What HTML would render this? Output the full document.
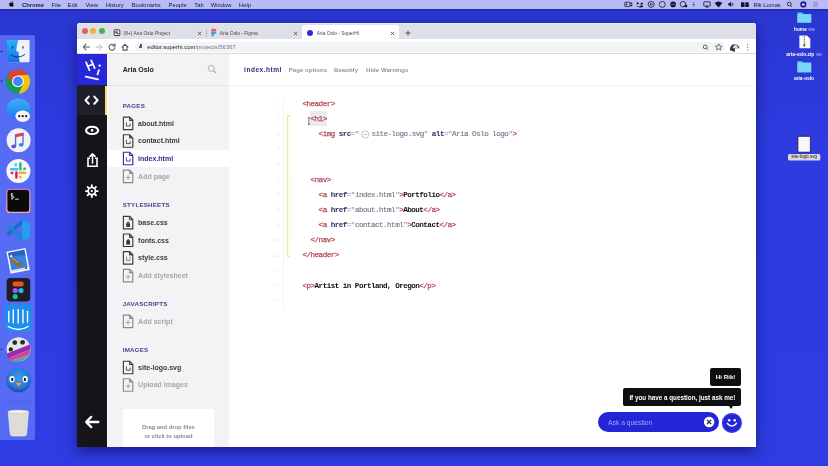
<!DOCTYPE html>
<html><head><meta charset="utf-8">
<style>
*{margin:0;padding:0;box-sizing:border-box}
html,body{width:828px;height:466px;overflow:hidden}
body{position:relative;font-family:"Liberation Sans",sans-serif;background:#3434de}
.a{position:absolute}
#desk{left:0;top:0;width:828px;height:466px;background:linear-gradient(180deg,#2a36d0 0%,#2d3be0 30%,#2e3ce4 100%)}
#menubar{left:0;top:0;width:828px;height:8.6px;background:#b9bcf4;color:#14144a;font-size:5.8px;line-height:10.4px;box-shadow:0 1px 2px rgba(0,0,60,.35);white-space:nowrap}
#menubar span{position:absolute;top:0}
#dock{left:0;top:34.6px;width:34.5px;height:405.5px;background:#566bf4;border-radius:0 2px 2px 0;box-shadow:inset 0 0.6px 0 #4a5ce8}
#win{left:77.4px;top:22.6px;width:678.8px;height:424px;background:#fff;border-radius:3px 3px 0 0;box-shadow:0 5px 14px rgba(0,0,50,.5)}
#tabs{left:77.4px;top:22.6px;width:678.8px;height:16.9px;background:#dee0e7;box-shadow:inset 0 0.6px 0 #f4f4f8;border-radius:3px 3px 0 0}
#toolbar{left:77.4px;top:39.5px;width:678.8px;height:14.5px;background:#fff;border-bottom:0.5px solid #dcdcdc}
.mono{font-family:"Liberation Mono",monospace}
.tabt{font-size:4.9px;color:#4a4a4a;line-height:8px;white-space:nowrap}
.side{left:77.4px;top:54px;width:29.8px;height:392.6px;background:#151519}
.files{left:107.2px;top:54px;width:121.4px;height:392.6px;background:#f3f3f5}
.ft{font-size:7px;font-weight:bold;color:#3a3a3a;line-height:10px;white-space:nowrap}
.fh{font-size:6.2px;font-weight:bold;color:#45458e;letter-spacing:0.22px;line-height:10px;white-space:nowrap}
.fi{width:10px;height:13px}
.code{font-family:"Liberation Mono",monospace;font-size:7.6px;letter-spacing:-0.53px;line-height:10px;white-space:pre;color:#222}
.t{color:#b54a58;-webkit-text-stroke:0.25px #b54a58}
.n{color:#2e2e66;font-weight:bold}
.s{color:#76768e;-webkit-text-stroke:0.15px #76768e}
.q{color:#888}
.b{font-weight:bold;color:#111}
.ln{font-family:"Liberation Mono",monospace;font-size:6.2px;color:#efefef;line-height:10px;width:10px;text-align:right}
</style></head><body>
<div id="root" class="a" style="left:0;top:0;width:828px;height:466px;will-change:transform;overflow:hidden">
<div id="desk" class="a"></div>

<!-- MENUBAR -->
<div id="menubar" class="a">
  <svg style="position:absolute;left:8.6px;top:1.4px" width="5" height="6" viewBox="0 0 170 200"><path fill="#111" d="M150 170c-8 12-17 24-30 24s-17-8-32-8-20 8-32 8-22-13-30-25C9 145-4 100 14 70c9-15 25-25 42-25 13 0 25 9 33 9s21-10 36-9c6 0 24 2 35 19-1 1-21 12-21 37 0 29 26 39 26 39s-6 18-15 30zM119 23c7-8 11-19 10-30-10 0-22 7-29 15-6 7-12 18-10 29 11 1 22-6 29-14z"/></svg>
  <span style="left:22px;font-weight:bold">Chrome</span>
  <span style="left:51.6px">File</span>
  <span style="left:67.6px">Edit</span>
  <span style="left:85.4px">View</span>
  <span style="left:105.7px">History</span>
  <span style="left:131.7px">Bookmarks</span>
  <span style="left:168.6px">People</span>
  <span style="left:194.3px">Tab</span>
  <span style="left:210.8px">Window</span>
  <span style="left:239px">Help</span>
  <span style="left:753.4px">Rik Lomas</span>
</div>

<svg class="a" style="left:620px;top:0" width="208" height="9" viewBox="620 0 208 9">
  <g fill="none" stroke="#15152e" stroke-width="0.8">
    <rect x="624.8" y="2.2" width="5.2" height="4.4" rx="0.5"/><path d="M630 3.6l1.8-1v3.6l-1.8-1"/>
    <circle cx="651.2" cy="4.4" r="3"/><circle cx="662.3" cy="4.4" r="3"/>
    <circle cx="683" cy="4.2" r="2.8"/>
    <rect x="703.8" y="1.8" width="6.4" height="4.3" rx="0.4"/>
    <path d="M728.3 3.2h1.2l1.8-1.5v5.4l-1.8-1.5h-1.2z" fill="#15152e" stroke="none"/><path d="M732.6 3q.8 1.4 0 2.8" />
    <circle cx="789.3" cy="4" r="1.9"/><path d="M790.6 5.4l1.6 1.6"/>
    <path d="M813 2.6h5M813 4.4h5M813 6.2h5" stroke="#7a7ec8"/>
  </g>
  <g fill="#15152e">
    <circle cx="626.6" cy="4.4" r="0.8" fill="#15152e"/>
    <path d="M637.3 2.2l2 1.3-1.3.9-2-1.3zM641.3 2.2l2 1.3-2 1.3-1.3-.9 1.3-.9zM636 5.1l2 1.3-.7.5M642.6 5.1 640.6 6.4l1.3.8 1.2-.8z"/>
    <path d="M639.3 6.6 641.3 5.3 643 6.4 641.3 7.6 639.3 7.6 637.6 6.4z" opacity=".9"/>
    <circle cx="651.2" cy="4.4" r="1.3"/><rect x="650.8" y="3" width="0.8" height="2.6" fill="#b9bcf4"/>
    <circle cx="673.1" cy="4.4" r="2.8"/><path d="M671.4 4.4h3.4" stroke="#b9bcf4" stroke-width="0.6"/>
    <rect x="684.5" y="4.8" width="2.6" height="2.4"/>
    <circle cx="693.7" cy="2.8" r="0.5"/><rect x="692.3" y="4.1" width="2.8" height="0.5"/><circle cx="693.7" cy="5.9" r="0.5"/>
    <path d="M705.4 7.4h3.2l-1.6-2z"/>
    <path d="M714.6 3.1Q718.5-.3 722.4 3.1L718.5 7.4Z"/>
    <path d="M741 2.2h2.3q1.3 0 1.3 1.2 0 .8-.6 1 .9.2.9 1.2 0 1.4-1.5 1.4H741z M745.3 2.2h2.3q1.3 0 1.3 1.2 0 .8-.6 1 .9.2.9 1.2 0 1.4-1.5 1.4h-2.4z"/>
    <circle cx="803.3" cy="4.4" r="3.1" fill="#1a2090"/>
  </g>
  <path d="M801.6 4.6q1.7-2 3.4 0-1.7 2-3.4 0" fill="#fff"/>
</svg>
<!-- DOCK -->
<div id="dock" class="a"></div>
<svg class="a" style="left:0;top:0" width="36" height="446" viewBox="0 0 36 446">
  <defs>
    <linearGradient id="msg" x1="0" y1="0" x2="0" y2="1"><stop offset="0" stop-color="#40aef8"/><stop offset="1" stop-color="#1a78ec"/></linearGradient>
    <linearGradient id="fnd" x1="0" y1="0" x2="0" y2="1"><stop offset="0" stop-color="#2ab0f8"/><stop offset="1" stop-color="#1670e6"/></linearGradient>
    <radialGradient id="twb" cx="0.5" cy="0.4" r="0.6"><stop offset="0" stop-color="#3a9af0"/><stop offset="0.7" stop-color="#2a78d8"/><stop offset="1" stop-color="#1a4aa8"/></radialGradient>
    <linearGradient id="note" x1="0" y1="0" x2="0" y2="1" gradientUnits="userSpaceOnUse" x2s="0"><stop offset="0" stop-color="#e4385e"/><stop offset="1" stop-color="#6a5ad8"/></linearGradient>
    <linearGradient id="trm" x1="0" y1="0" x2="0" y2="1"><stop offset="0" stop-color="#d070c0"/><stop offset="1" stop-color="#f0b0a0"/></linearGradient>
    <linearGradient id="vsc" x1="0" y1="0" x2="0" y2="1"><stop offset="0" stop-color="#2aa3ea"/><stop offset="1" stop-color="#157ad0"/></linearGradient>
  </defs>
  <circle cx="1.6" cy="51.4" r="0.8" fill="#1a1a40"/>
  <circle cx="1.6" cy="81" r="0.8" fill="#1a1a40"/>
  <circle cx="1.6" cy="349.5" r="0.8" fill="#1a1a40"/>
  <!-- finder -->
  <rect x="7" y="39.9" width="22.6" height="22.3" rx="1.4" fill="#eef2f8"/>
  <path d="M8.4 39.9H18.2Q16.6 45.5 16.2 51.6H18.5Q18.6 57.5 19.8 62.2H8.4Q7 62.2 7 60.8V41.3Q7 39.9 8.4 39.9Z" fill="url(#fnd)"/>
  <path d="M12.6 46.2v2.4M23 46.2v2.4" stroke="#1a2a50" stroke-width="1.1"/>
  <path d="M10.8 54.8Q18 59.5 25 54.3" fill="none" stroke="#1a2a50" stroke-width="0.9"/>
  <!-- chrome -->
  <circle cx="17.9" cy="81.4" r="12.2" fill="#0f9d58"/>
  <path d="M13.01 84.70 L7.03 75.86 A12.20 12.20 0 0 1 28.13 74.76 L17.49 75.51 L17.90 81.40 Z" fill="#db4437"/>
  <path d="M17.49 75.51 L28.13 74.76 A12.20 12.20 0 0 1 18.54 93.58 L23.20 83.99 L17.90 81.40 Z" fill="#f4c20d"/>
  <path d="M23.20 83.99 L18.54 93.58 A12.20 12.20 0 0 1 7.03 75.86 L13.01 84.70 L17.90 81.40 Z" fill="#0f9d58"/>
  <circle cx="17.9" cy="81.4" r="5.9" fill="#fff"/>
  <circle cx="17.9" cy="81.4" r="4.8" fill="#4285f4"/>
  <!-- messages -->
  <ellipse cx="18.3" cy="109" rx="11.8" ry="10.4" fill="url(#msg)"/>
  <ellipse cx="22.7" cy="116.2" rx="7.3" ry="5.7" fill="#f4f6fa"/>
  <circle cx="19.2" cy="116.2" r="1.15" fill="#1a1a2a"/><circle cx="22.7" cy="116.2" r="1.15" fill="#1a1a2a"/><circle cx="26.2" cy="116.2" r="1.15" fill="#1a1a2a"/>
  <!-- music -->
  <circle cx="18.6" cy="140.3" r="12" fill="#f1f1f6"/>
  <path d="M15 134.2 23.6 132.4V135.6L15 137.4Z" fill="#e4385e"/>
  <path d="M15.6 135v11.2M23 133.6v11" stroke="url(#note)" stroke-width="1.3" fill="none"/>
  <ellipse cx="13.7" cy="146.4" rx="2.3" ry="1.9" fill="#6a4cd0"/><ellipse cx="21.2" cy="144.8" rx="2.3" ry="1.9" fill="#2a8ee0"/>
  <!-- slack -->
  <circle cx="18.4" cy="171" r="12" fill="#f6f6f8"/>
  <g stroke-width="2.5" stroke-linecap="round" fill="none">
    <path d="M11.2 169.2h6" stroke="#36c5f0"/><path d="M15.8 164.6v0.4" stroke="#36c5f0"/>
    <path d="M20.4 163.6v5.6" stroke="#2eb67d"/><path d="M24.4 168.8h0.4" stroke="#2eb67d"/>
    <path d="M19.6 172.8h5.6" stroke="#ecb22e"/><path d="M20.4 177v0.4" stroke="#ecb22e"/>
    <path d="M16.4 172.6v5" stroke="#e01e5a"/><path d="M11.8 173h0.4" stroke="#e01e5a"/>
  </g>
  <!-- terminal -->
  <rect x="6.8" y="189.4" width="23" height="23" rx="3" fill="#0a0a0a" stroke="url(#trm)" stroke-width="1.3"/>
  <path d="M12.6 193.6q-1.6.2-1.4 1.3.2 1 1.4 1.2 1.2.2 1.2 1.2-.1 1.1-1.8 1.2M11.9 192.8v7" fill="none" stroke="#fff" stroke-width="0.8"/><path d="M15.2 199.2h3.4" stroke="#fff" stroke-width="0.9"/>
  <!-- vscode -->
  <path d="M23.2 221 8.6 233.6" stroke="#1470c4" stroke-width="3.4" stroke-linecap="round"/>
  <path d="M8.6 226.6 23.2 239.6" stroke="#1a84d6" stroke-width="3.4" stroke-linecap="round"/>
  <path d="M22.4 219.4 29.8 222.8V238.2L22.4 241.6Z" fill="#22a2ee"/>
  <!-- preview -->
  <g transform="rotate(-11 18 261)">
    <rect x="8.3" y="249.6" width="19.6" height="22.4" fill="#eef4fb"/>
    <rect x="9.9" y="251.2" width="16.4" height="17.6" fill="#3a7ee0"/>
    <path d="M9.9 251.2h16.4v6Q18 254 9.9 257z" fill="#2a62c8"/>
    <path d="M11.5 256q3 1 5 4 2 3 6.5 6.5l-1 1.5q-6-2-9-5.5-1.5-2-1.5-6.5z" fill="#8a6a3a"/>
    <path d="M13 257.5q2.5 2 4.5 5" stroke="#d8b870" stroke-width="0.9" fill="none"/>
    <circle cx="12.3" cy="255" r="1.2" fill="#f0f0f0"/>
    <rect x="9.9" y="268.8" width="16.4" height="1.6" fill="#c8dcf0"/>
    <circle cx="24.5" cy="269.6" r="0.9" fill="#223"/>
  </g>
  <!-- figma -->
  <rect x="6.6" y="277.9" width="23.6" height="23.7" rx="4" fill="#1e1e24"/>
  <rect x="12.5" y="281.5" width="11.2" height="5" rx="2.5" fill="#f24e1e"/>
  <circle cx="15.2" cy="290.5" r="2.6" fill="#a259ff"/><circle cx="21" cy="290.5" r="2.6" fill="#1abcfe"/><circle cx="15.2" cy="296.5" r="2.6" fill="#0acf83"/>
  <!-- intercom -->
  <rect x="5" y="304.2" width="26.5" height="27.3" rx="1.5" fill="#1f8ded"/>
  <g stroke="#fff" stroke-width="1.4" stroke-linecap="round"><path d="M8.8 311.5v10.5M13.3 310v12.8M18.2 309.5v13.6M23 310v12.8M27.5 311.5v10.5"/><path d="M8.2 326.5q10 6 20 0" fill="none"/></g>
  <!-- movie circle -->
  <circle cx="18.6" cy="349.3" r="12" fill="#e4e4ea"/>
  <path d="M7 353.5 29.8 344.5Q30.5 347 30.4 349.5L8.2 358.2Q7.3 356 7 353.5z" fill="#9a2ab0"/>
  <path d="M8.2 358.2 30.4 349.5Q30 353 28.5 355.5L10 361Q8.8 359.8 8.2 358.2z" fill="#c84aa0"/>
  <path d="M10 361 28.5 355.5Q26 359 22.5 360.6 18 362 12.5 361.6z" fill="#5aa890"/>
  <circle cx="14.8" cy="342.6" r="2.4" fill="#2a2a2a"/><circle cx="22.6" cy="342.3" r="2.4" fill="#2a2a2a"/><circle cx="10.8" cy="349.4" r="2.2" fill="#2a2a2a"/>
  <!-- tweetbot -->
  <circle cx="18.6" cy="380" r="12.3" fill="url(#twb)"/>
  <ellipse cx="12" cy="379.2" rx="2.6" ry="3.2" fill="#fff"/><ellipse cx="25.2" cy="379.2" rx="2.6" ry="3.2" fill="#fff"/>
  <ellipse cx="12.3" cy="379.5" rx="1.1" ry="1.8" fill="#111"/><ellipse cx="24.9" cy="379.5" rx="1.1" ry="1.8" fill="#111"/>
  <path d="M15.4 382.8h6.4l-3.2 3.8z" fill="#f4a020"/>
  <!-- separator -->
  <path d="M4 401.4H32" stroke="#4a5ce6" stroke-width="0.7"/>
  <!-- trash -->
  <path d="M8.2 411.5H28.5L26.6 434Q26.4 436 24 436H12.8Q10.4 436 10.2 434Z" fill="#dedcd6" stroke="#f4f4f4" stroke-width="0.6"/>
  <ellipse cx="18.35" cy="411.6" rx="10.2" ry="1.5" fill="#f6f6f8" stroke="#c8c8d0" stroke-width="0.5"/>
</svg>

<!-- DESKTOP ICONS -->
<svg class="a" style="left:760px;top:0" width="68" height="170" viewBox="760 0 68 170">
  <g fill="#5ac8f0">
    <path d="M797.4 12.6h4.6l1.2 1.3h8v8.7h-13.8z"/>
    <path d="M797.4 61.2h4.6l1.2 1.3h8v9.8h-13.8z"/>
  </g>
  <g fill="#7ad6f8"><rect x="797.4" y="14.3" width="13.8" height="8.3"/><rect x="797.4" y="62.9" width="13.8" height="9.4"/></g>
  <path d="M799.4 35.4h7.6l3.3 3.3v9.6h-10.9z" fill="#fafafa"/>
  <path d="M804.3 36v9" stroke="#444" stroke-width="0.9" stroke-dasharray="0.9 0.6"/>
  <rect x="803.4" y="44" width="1.8" height="2.4" fill="#555"/>
  <path d="M797.9 136.3h12.5v15.9h-12.5z" fill="#f8f8fb" stroke="#1a1a30" stroke-width="0.8"/>
  <rect x="788" y="154.1" width="32.3" height="6.5" rx="1.5" fill="#d8d8e0"/>
</svg>
<div class="a" style="left:788px;top:153.4px;width:32.3px;text-align:center;font-size:4.6px;color:#222;line-height:8px;white-space:nowrap">site-logo.svg</div>
<div class="a" style="left:794px;top:25.6px;font-size:4.8px;font-weight:bold;color:#fff;line-height:8px;white-space:nowrap">home</div>
<div class="a" style="left:807.5px;top:27.6px;width:7px;height:3.5px;border-radius:1px;background:#6a70e8"></div>
<div class="a" style="left:786.3px;top:50.5px;font-size:4.8px;font-weight:bold;color:#fff;line-height:8px;white-space:nowrap">aria-oslo.zip</div>
<div class="a" style="left:816px;top:52.6px;width:6px;height:3.5px;border-radius:1px;background:#6a70e8"></div>
<div class="a" style="left:794px;top:74.5px;font-size:4.8px;font-weight:bold;color:#fff;line-height:8px;white-space:nowrap">aria-oslo</div>

<!-- WINDOW -->
<div id="win" class="a"></div>
<div id="tabs" class="a"></div>
<!-- traffic lights -->
<div class="a" style="left:81.8px;top:27.8px;width:6px;height:6px;border-radius:50%;background:#e4605a"></div>
<div class="a" style="left:90.2px;top:27.8px;width:6px;height:6px;border-radius:50%;background:#e9b340"></div>
<div class="a" style="left:98.6px;top:27.8px;width:6px;height:6px;border-radius:50%;background:#45b649"></div>
<!-- tab 1 -->
<svg class="a" style="left:113px;top:29px" width="8" height="8" viewBox="0 0 8 8"><rect x="1.2" y="0.8" width="5.6" height="5.8" rx="0.8" fill="#f4f4f4" stroke="#222" stroke-width="0.9"/><path d="M2.6 2.6 5.4 5" stroke="#333" stroke-width="1.1"/><path d="M2.8 4.8v-2.2h2" stroke="#444" stroke-width="0.6" fill="none"/></svg>
<div class="a tabt" style="left:123.5px;top:29.7px">(8+) Aria Oslo Project</div>
<svg class="a" style="left:196.7px;top:30.5px" width="5" height="5" viewBox="0 0 5 5"><path d="M0.9 0.9 4.1 4.1M4.1 0.9 0.9 4.1" stroke="#333" stroke-width="0.75"/></svg>
<div class="a" style="left:205.5px;top:29px;width:0.6px;height:8px;background:#b8b8bc"></div>
<!-- tab 2 -->
<svg class="a" style="left:210px;top:28px" width="8" height="9" viewBox="0 0 8 9"><rect x="1.2" y="0.8" width="5" height="2.8" rx="1.4" fill="#e8604a"/><circle cx="2.6" cy="4.9" r="1.4" fill="#8a5ee8"/><circle cx="4.9" cy="4.9" r="1.4" fill="#3aa8f0"/><circle cx="2.6" cy="7.1" r="1.4" fill="#2ac080"/></svg>
<div class="a tabt" style="left:219.8px;top:29.7px">Aria Oslo - Figma</div>
<svg class="a" style="left:293.0px;top:30.5px" width="5" height="5" viewBox="0 0 5 5"><path d="M0.9 0.9 4.1 4.1M4.1 0.9 0.9 4.1" stroke="#333" stroke-width="0.75"/></svg>
<!-- tab 3 active -->
<div class="a" style="left:302.2px;top:25.4px;width:96.6px;height:14.3px;background:#fff;border-radius:3px 3px 0 0"></div>
<div class="a" style="left:306.8px;top:29.8px;width:6.6px;height:6.6px;border-radius:50%;background:#2f2fc9"></div>
<div class="a tabt" style="left:316.7px;top:29.7px">Aria Oslo - SuperHi</div>
<svg class="a" style="left:389.7px;top:30.5px" width="5" height="5" viewBox="0 0 5 5"><path d="M0.9 0.9 4.1 4.1M4.1 0.9 0.9 4.1" stroke="#333" stroke-width="0.75"/></svg>
<svg class="a" style="left:404.5px;top:30px" width="6" height="6" viewBox="0 0 6 6"><path d="M3 0.5V5.5M0.5 3H5.5" stroke="#444" stroke-width="0.9"/></svg>

<div id="toolbar" class="a"></div>
<!-- nav icons -->
<svg class="a" style="left:80px;top:41px" width="60" height="12" viewBox="0 0 60 12">
  <g fill="none" stroke="#555" stroke-width="1.05" stroke-linecap="round" stroke-linejoin="round">
    <path d="M3.5 6h6M6 3.2 3.3 6 6 8.8"/>
  </g>
  <g fill="none" stroke="#bbb" stroke-width="1" stroke-linecap="round" stroke-linejoin="round">
    <path d="M16 6h6M19.5 3.2 22.2 6 19.5 8.8"/>
  </g>
  <g fill="none" stroke="#555" stroke-width="1.05" stroke-linecap="round">
    <path d="M34.5 4.5A3 3 0 1 0 35 6.5"/><path d="M35 2.8v2.2h-2.2"/>
    <path d="M42 6.2 45 3.3 48 6.2M43 5.5v3.6h4V5.5"/>
  </g>
</svg>
<div class="a" style="left:135.2px;top:42px;width:589.5px;height:10px;border-radius:5px;background:#f1f3f4"></div>
<div class="a" style="left:139.4px;top:45.6px;width:2.6px;height:2.4px;background:#555;border-radius:0.4px"></div>
<div class="a" style="left:139.9px;top:44.2px;width:1.6px;height:2px;border:0.5px solid #555;border-bottom:none;border-radius:1px 1px 0 0"></div>
<div class="a" style="left:147.3px;top:43px;font-size:5.9px;line-height:8px;color:#222;white-space:nowrap">editor.superhi.com<span style="color:#777">/projects/56367</span></div>
<svg class="a" style="left:700px;top:41.5px" width="56" height="11" viewBox="0 0 56 11">
  <circle cx="5.2" cy="4.9" r="1.9" fill="none" stroke="#555" stroke-width="0.9"/><path d="M6.6 6.3 8 7.7" stroke="#555" stroke-width="1"/>
  <path d="M18.7 1.8l1 2.2 2.3.2-1.8 1.5.6 2.3-2.1-1.3-2.1 1.3.6-2.3-1.8-1.5 2.3-.2z" fill="none" stroke="#555" stroke-width="0.8"/>
  <path d="M30.2 8.5A4.8 4.8 0 1 1 39.5 6.3L35 6.3 34.8 9.8Z" fill="#3a3048"/><path d="M32.6 6.3Q33.5 2.6 35.6 2.8 37.6 3 38 6.3z" fill="#e0d4d4"/><path d="M34.4 7v3" stroke="#555" stroke-width="0.8"/>
  <circle cx="47.7" cy="2.6" r="0.6" fill="#666"/><circle cx="47.7" cy="5.2" r="0.6" fill="#666"/><circle cx="47.7" cy="7.8" r="0.6" fill="#666"/>
</svg>

<!-- SIDEBAR -->
<div class="a side"></div>
<div class="a" style="left:77.4px;top:54px;width:29.8px;height:31px;background:#2828d8"></div>
<svg class="a" style="left:77.6px;top:54px" width="30" height="31" viewBox="77.6 54 30 31">
  <g stroke="#fff" stroke-width="1.7" stroke-linecap="round" fill="none">
    <path d="M85.6 62.2 89 70.2"/><path d="M90.8 60.4 94.3 68.2"/><path d="M87.2 66.2 92.6 64.2"/>
    <path d="M98.6 70 97.1 74.4"/><path d="M85.2 76.6 97.7 79.3"/>
  </g>
  <circle cx="99.3" cy="65.6" r="1.2" fill="#fff"/>
</svg>
<div class="a" style="left:77.4px;top:85px;width:29.8px;height:30px;background:#1f1f2b"></div>
<div class="a" style="left:105.2px;top:85.5px;width:2.4px;height:29.5px;background:#f7e06a"></div>
<svg class="a" style="left:77.6px;top:85px" width="30" height="362" viewBox="77.6 85 30 362">
  <g stroke="#fff" stroke-width="2" fill="none" stroke-linecap="round" stroke-linejoin="round">
    <path d="M88.4 96.6 85.1 100.2 88.4 103.8"/><path d="M93.9 96.6 97.2 100.2 93.9 103.8"/>
    <path d="M85.6 130.4C86.8 125.6 96.6 125.6 97.8 130.4C96.6 135.2 86.8 135.2 85.6 130.4Z" stroke-width="2.1"/>
    <path d="M89.6 158.2H87.6v8.1h9v-8.1H94.6" stroke-width="1.6" stroke-linecap="butt" stroke-linejoin="miter"/>
    <path d="M92.1 163V154M89.6 156.4 92.1 153.9 94.6 156.4" stroke-width="1.6"/>
    <path d="M98 422H86.2M90.8 416.9 85.7 422 90.8 427.1" stroke-width="2.3"/>
  </g>
  <circle cx="91.7" cy="130.4" r="1.3" fill="#fff"/>
  <g transform="translate(91.4 191.1)">
    <circle r="3.6" fill="none" stroke="#fff" stroke-width="1.7"/><circle r="1.15" fill="#fff"/>
    <g stroke="#fff" stroke-width="1.9" stroke-linecap="round"><path d="M0 -4.2V-5.9M0 4.2V5.9M-4.2 0H-5.9M4.2 0H5.9M2.97 -2.97 4.17 -4.17M-2.97 2.97-4.17 4.17M2.97 2.97 4.17 4.17M-2.97 -2.97-4.17 -4.17"/></g>
  </g>
</svg>

<!-- FILES PANEL -->
<div class="a files"></div>
<div class="a" style="left:107.2px;top:85px;width:1.3px;height:361.6px;background:#fbfbfc"></div>
<div class="a" style="left:107.2px;top:84.7px;width:121.4px;height:0.6px;background:#e4e4e8"></div>
<div class="a ft" style="left:122.7px;top:65.1px;color:#222">Aria Oslo</div>
<svg class="a" style="left:206px;top:63px" width="12" height="12" viewBox="0 0 12 12"><circle cx="5.4" cy="5.4" r="3" fill="none" stroke="#aaa" stroke-width="1"/><path d="M7.6 7.6 10 10" stroke="#aaa" stroke-width="1.1"/></svg>

<div class="a" style="left:107.2px;top:150.2px;width:121.4px;height:16.8px;background:#fff"></div>

<div class="a fh" style="left:122.7px;top:100.8px">PAGES</div>
<div class="a ft" style="left:138.1px;top:118.7px">about.html</div>
<div class="a ft" style="left:138.1px;top:136.3px">contact.html</div>
<div class="a ft" style="left:138.1px;top:153.8px;color:#2e2e86">index.html</div>
<div class="a ft" style="left:138.1px;top:171.7px;color:#a6a6ab">Add page</div>

<div class="a fh" style="left:122.7px;top:199.9px">STYLESHEETS</div>
<div class="a ft" style="left:138.1px;top:218.0px">base.css</div>
<div class="a ft" style="left:138.1px;top:235.6px">fonts.css</div>
<div class="a ft" style="left:138.1px;top:253.2px">style.css</div>
<div class="a ft" style="left:138.1px;top:271.0px;color:#a6a6ab">Add stylesheet</div>

<div class="a fh" style="left:122.7px;top:298.9px">JAVASCRIPTS</div>
<div class="a ft" style="left:138.1px;top:316.7px;color:#a6a6ab">Add script</div>

<div class="a fh" style="left:122.7px;top:345.2px">IMAGES</div>
<div class="a ft" style="left:138.1px;top:362.8px">site-logo.svg</div>
<div class="a ft" style="left:138.1px;top:380.3px;color:#a6a6ab">Upload images</div>

<svg class="a" style="left:107px;top:100px" width="30" height="300" viewBox="107 100 30 300">
  
  <g stroke="#3c3c3c"><path transform="translate(123.4 117.1)" d="M0 0h6.3l3.1 3.2v9.3h-9.4z M6.3 0.3v3h3" fill="none" stroke-width="1.15" stroke-linejoin="miter"/><path transform="translate(123.4 134.7)" d="M0 0h6.3l3.1 3.2v9.3h-9.4z M6.3 0.3v3h3" fill="none" stroke-width="1.15" stroke-linejoin="miter"/><path transform="translate(123.4 216.4)" d="M0 0h6.3l3.1 3.2v9.3h-9.4z M6.3 0.3v3h3" fill="none" stroke-width="1.15" stroke-linejoin="miter"/><path transform="translate(123.4 234)" d="M0 0h6.3l3.1 3.2v9.3h-9.4z M6.3 0.3v3h3" fill="none" stroke-width="1.15" stroke-linejoin="miter"/><path transform="translate(123.4 251.6)" d="M0 0h6.3l3.1 3.2v9.3h-9.4z M6.3 0.3v3h3" fill="none" stroke-width="1.15" stroke-linejoin="miter"/><path transform="translate(123.4 361.2)" d="M0 0h6.3l3.1 3.2v9.3h-9.4z M6.3 0.3v3h3" fill="none" stroke-width="1.15" stroke-linejoin="miter"/></g>
  <g stroke="#2d2d96"><path transform="translate(123.4 152.2)" d="M0 0h6.3l3.1 3.2v9.3h-9.4z M6.3 0.3v3h3" fill="none" stroke-width="1.15" stroke-linejoin="miter"/></g>
  <g stroke="#88888e"><path transform="translate(123.4 170.1)" d="M0 0h6.3l3.1 3.2v9.3h-9.4z M6.3 0.3v3h3" fill="none" stroke-width="1.15" stroke-linejoin="miter"/><path transform="translate(123.4 269.4)" d="M0 0h6.3l3.1 3.2v9.3h-9.4z M6.3 0.3v3h3" fill="none" stroke-width="1.15" stroke-linejoin="miter"/><path transform="translate(123.4 315.1)" d="M0 0h6.3l3.1 3.2v9.3h-9.4z M6.3 0.3v3h3" fill="none" stroke-width="1.15" stroke-linejoin="miter"/><path transform="translate(123.4 378.7)" d="M0 0h6.3l3.1 3.2v9.3h-9.4z M6.3 0.3v3h3" fill="none" stroke-width="1.15" stroke-linejoin="miter"/></g>
  <g fill="none" stroke-width="0.85">
    <path d="M126.4 122.2v3.8h3.8v-2.4" stroke="#3c3c3c"/>
    <path d="M126.4 139.8v3.8h3.8v-2.4" stroke="#3c3c3c"/>
    <path d="M126.4 157.3v3.8h3.8v-2.4" stroke="#2d2d96"/>
    <path d="M126.4 366.4v3.8h3.8v-2.4" stroke="#3c3c3c"/>
    <path d="M126.6 256.6v3.9h3.4v-3.9" stroke="#777"/>
    <path d="M128.1 175.1v4.8M125.7 177.5h4.8" stroke="#9c9ca2"/>
    <path d="M128.1 274.4v4.8M125.7 276.8h4.8" stroke="#9c9ca2"/>
    <path d="M128.1 320.1v4.8M125.7 322.5h4.8" stroke="#9c9ca2"/>
    <path d="M128.1 383.7v4.8M125.7 386.1h4.8" stroke="#9c9ca2"/>
  </g>
  <g fill="#3c3c3c"><rect x="126.2" y="223.4" width="3.9" height="3.6"/><rect x="126.2" y="241" width="3.9" height="3.6"/><path d="M128.15 221.2l2 2.2h-4z"/><path d="M128.15 238.8l2 2.2h-4z"/></g>
</svg>

<div class="a" style="left:122.7px;top:409.4px;width:91.5px;height:38px;background:#fff;border-radius:1px"></div>
<div class="a" style="left:122.7px;top:423.2px;width:91.5px;font-size:5.8px;font-weight:bold;color:#8a8a8e;text-align:center;line-height:8.6px">Drag and drop files<br>or click to upload</div>

<!-- EDITOR -->
<div class="a" style="left:228.6px;top:84.7px;width:527.6px;height:0.7px;background:#f4f4f4"></div>
<div class="a ft" style="left:244.1px;top:65.3px;font-size:6.6px;letter-spacing:0.47px;color:#2e2e7a">index.html</div>
<div class="a ft" style="left:288.8px;top:64.8px;font-size:6.1px;color:#959598">Page options</div>
<div class="a ft" style="left:334px;top:64.8px;font-size:6.1px;color:#959598">Beautify</div>
<div class="a ft" style="left:366px;top:64.8px;font-size:6.1px;color:#959598">Hide Warnings</div>

<div class="a" style="left:283.4px;top:101px;width:0.8px;height:207px;background:#f1f1f8"></div>
<div class="a" style="left:285.8px;top:115.2px;width:4.4px;height:141.8px;background:#fcfbe8"></div>
<div class="a" style="left:287.1px;top:115.2px;width:1.4px;height:141.8px;background:#ebe6ae"></div>
<div class="a" style="left:287.1px;top:115.2px;width:3.4px;height:1.4px;background:#ede8b4"></div>
<div class="a" style="left:287.1px;top:255.6px;width:3.4px;height:1.4px;background:#ede8b4"></div>
<div class="a" style="left:290.8px;top:175px;width:0.6px;height:68px;background:#f8f7e6"></div>
<div class="a" style="left:310px;top:111.2px;width:16.9px;height:15.2px;background:#ebebeb"></div>

<div class="a" style="left:270px;top:99.5px">
<div class="ln a" style="top:0">1</div>
<div class="ln a" style="top:15.13px">2</div>
<div class="ln a" style="top:30.26px">3</div>
<div class="ln a" style="top:45.39px">4</div>
<div class="ln a" style="top:60.52px">5</div>
<div class="ln a" style="top:75.65px">6</div>
<div class="ln a" style="top:90.78px">7</div>
<div class="ln a" style="top:105.91px">8</div>
<div class="ln a" style="top:121.04px">9</div>
<div class="ln a" style="top:136.17px">10</div>
<div class="ln a" style="top:151.3px">11</div>
<div class="ln a" style="top:166.43px">12</div>
<div class="ln a" style="top:181.56px">13</div>
<div class="ln a" style="top:196.69px">14</div>
</div>

<div class="a" style="left:302.5px;top:99.2px">
<div class="code a" style="top:0"><span class="t">&lt;header&gt;</span></div>
<div class="code a" style="top:15.13px">  <span class="t">&lt;h1&gt;</span></div>
<div class="code a" style="top:30.26px">    <span class="t">&lt;img</span> <span class="n">src</span><span class="q">="</span><span style="display:inline-block;width:12.5px"></span><span class="s">site-logo.svg</span><span class="q">"</span> <span class="n">alt</span><span class="q">="</span><span class="s">Aria Oslo logo</span><span class="q">"</span><span class="t">&gt;</span></div>
<div class="code a" style="top:75.65px">  <span class="t">&lt;nav&gt;</span></div>
<div class="code a" style="top:90.78px">    <span class="t">&lt;a</span> <span class="n">href</span><span class="q">="</span><span class="s">index.html</span><span class="q">"</span><span class="t">&gt;</span><span class="b">Portfolio</span><span class="t">&lt;/a&gt;</span></div>
<div class="code a" style="top:105.91px">    <span class="t">&lt;a</span> <span class="n">href</span><span class="q">="</span><span class="s">about.html</span><span class="q">"</span><span class="t">&gt;</span><span class="b">About</span><span class="t">&lt;/a&gt;</span></div>
<div class="code a" style="top:121.04px">    <span class="t">&lt;a</span> <span class="n">href</span><span class="q">="</span><span class="s">contact.html</span><span class="q">"</span><span class="t">&gt;</span><span class="b">Contact</span><span class="t">&lt;/a&gt;</span></div>
<div class="code a" style="top:136.17px">  <span class="t">&lt;/nav&gt;</span></div>
<div class="code a" style="top:151.3px"><span class="t">&lt;/header&gt;</span></div>
<div class="code a" style="top:181.56px"><span class="t">&lt;p&gt;</span><span class="b">Artist in Portland, Oregon</span><span class="t">&lt;/p&gt;</span></div>
</div>
<svg class="a" style="left:359px;top:129px" width="12" height="11" viewBox="0 0 12 11"><circle cx="6.2" cy="5.4" r="3.6" fill="none" stroke="#aaa" stroke-width="0.7"/><path d="M4.4 5.4h3.6" stroke="#aaa" stroke-width="0.7"/></svg>
<!-- I-beam cursor -->
<svg class="a" style="left:305.5px;top:116px" width="7" height="10" viewBox="0 0 7 10"><path d="M1.9 1.6h2M1.9 8.4h2M2.9 1.6v6.8" stroke="#444" stroke-width="0.75" fill="none"/></svg>

<!-- CHAT -->
<div class="a" style="left:709.8px;top:368.3px;width:31.7px;height:17.5px;background:#0f0f12;border-radius:2px"></div>
<div class="a" style="left:709.8px;top:372px;width:31.7px;text-align:center;font-size:6.2px;font-weight:bold;color:#fff;line-height:10px">Hi Rik!</div>
<div class="a" style="left:623.3px;top:388.4px;width:118.2px;height:17.6px;background:#0f0f12;border-radius:2px"></div>
<div class="a" style="left:623.3px;top:392.5px;width:118.2px;text-align:center;font-size:6.3px;font-weight:bold;color:#fff;line-height:10px;white-space:nowrap">If you have a question, just ask me!</div>
<div class="a" style="left:729.2px;top:405.8px;width:0;height:0;border-left:2.5px solid transparent;border-right:2.5px solid transparent;border-top:3px solid #0f0f12"></div>
<div class="a" style="left:598.2px;top:412.1px;width:120.7px;height:19.8px;background:#2424d8;border-radius:10px"></div>
<div class="a" style="left:608.1px;top:418px;font-size:6.75px;color:#a3a6f4;line-height:10px;white-space:nowrap">Ask a question</div>
<svg class="a" style="left:703px;top:416.4px" width="12" height="12" viewBox="0 0 12 12"><circle cx="6.1" cy="6" r="5.3" fill="#fff"/><path d="M4 3.9 8.2 8.1M8.2 3.9 4 8.1" stroke="#222" stroke-width="1.3"/></svg>
<svg class="a" style="left:721px;top:411.5px" width="22" height="22" viewBox="0 0 22 22"><circle cx="10.9" cy="10.9" r="10" fill="#2424d8"/><circle cx="10.9" cy="10.9" r="9.3" fill="none" stroke="#5a5ae6" stroke-width="0.5"/><circle cx="8.2" cy="8.3" r="1.3" fill="#fff"/><circle cx="13.7" cy="8.3" r="1.3" fill="#fff"/><path d="M6.4 11.4q4.5 5.2 9 0" fill="none" stroke="#fff" stroke-width="1.5" stroke-linecap="round"/></svg>

</div>
</body></html>
